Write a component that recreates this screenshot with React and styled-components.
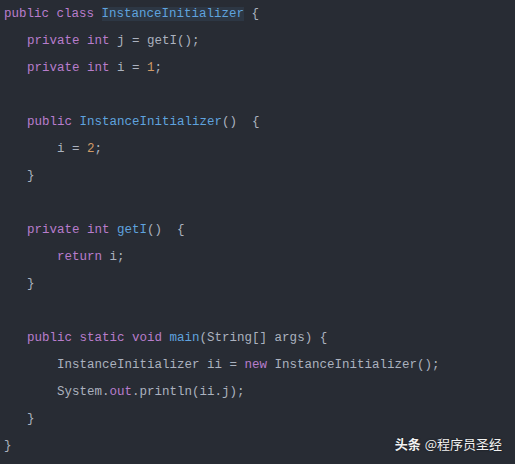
import React from 'react';
import styled, { createGlobalStyle } from 'styled-components';

const Global = createGlobalStyle`
  html, body {
    margin: 0;
    padding: 0;
    background: #282c34;
  }
`;

const Editor = styled.div`
  position: relative;
  width: 515px;
  height: 464px;
  background: #282c34;
  overflow: hidden;
  font-family: "Liberation Mono", "DejaVu Sans Mono", monospace;
  font-size: 12.5px;
  color: #abb2bf;
  padding: 1px 0 0 4px;
  box-sizing: border-box;
`;

const Line = styled.div`
  height: 27px;
  line-height: 27px;
  white-space: pre;
  padding-left: ${p => [0, 23, 53][p.$level || 0]}px;
`;

const colors = {
  kw: '#b87dcc',
  type: '#5fa3df',
  fn: '#5fa3df',
  num: '#d19a66',
  plain: '#abb2bf',
};

const Tok = styled.span`
  color: ${p => colors[p.$kind] || colors.plain};
  ${p => p.$hl && 'background: #2d3744;'}
`;

const Watermark = styled.div`
  position: absolute;
  right: 13px;
  bottom: 11px;
  font-family: "Noto Sans CJK SC", "Noto Sans", sans-serif;
  font-size: 13px;
  color: #f2f2f2;
  text-shadow: 0 0 2px rgba(0, 0, 0, 0.5);
  display: flex;
  align-items: center;
  gap: 4px;
`;

const Brand = styled.span`
  font-weight: 700;
`;

const lines = [
  [0, [['kw', 'public'], ['', ' '], ['kw', 'class'], ['', ' '], ['type', 'InstanceInitializer', true], ['', ' {']]],
  [1, [['kw', 'private'], ['', ' '], ['kw', 'int'], ['', ' j = getI();']]],
  [1, [['kw', 'private'], ['', ' '], ['kw', 'int'], ['', ' i = '], ['num', '1'], ['', ';']]],
  [0, []],
  [1, [['kw', 'public'], ['', ' '], ['type', 'InstanceInitializer'], ['', '()  {']]],
  [2, [['', 'i = '], ['num', '2'], ['', ';']]],
  [1, [['', '}']]],
  [0, []],
  [1, [['kw', 'private'], ['', ' '], ['kw', 'int'], ['', ' '], ['fn', 'getI'], ['', '()  {']]],
  [2, [['kw', 'return'], ['', ' i;']]],
  [1, [['', '}']]],
  [0, []],
  [1, [['kw', 'public'], ['', ' '], ['kw', 'static'], ['', ' '], ['kw', 'void'], ['', ' '], ['fn', 'main'], ['', '(String[] args) {']]],
  [2, [['', 'InstanceInitializer ii = '], ['kw', 'new'], ['', ' InstanceInitializer();']]],
  [2, [['', 'System.'], ['kw', 'out'], ['', '.println(ii.j);']]],
  [1, [['', '}']]],
  [0, [['', '}']]],
];

export default function App() {
  return (
    <>
      <Global />
      <Editor>
        {lines.map(([level, toks], i) => (
          <Line key={i} $level={level}>
            {toks.map(([kind, text, hl], j) => (
              <Tok key={j} $kind={kind} $hl={hl}>{text}</Tok>
            ))}
          </Line>
        ))}
        <Watermark>
          <Brand>头条</Brand>
          <span>@程序员圣经</span>
        </Watermark>
      </Editor>
    </>
  );
}
